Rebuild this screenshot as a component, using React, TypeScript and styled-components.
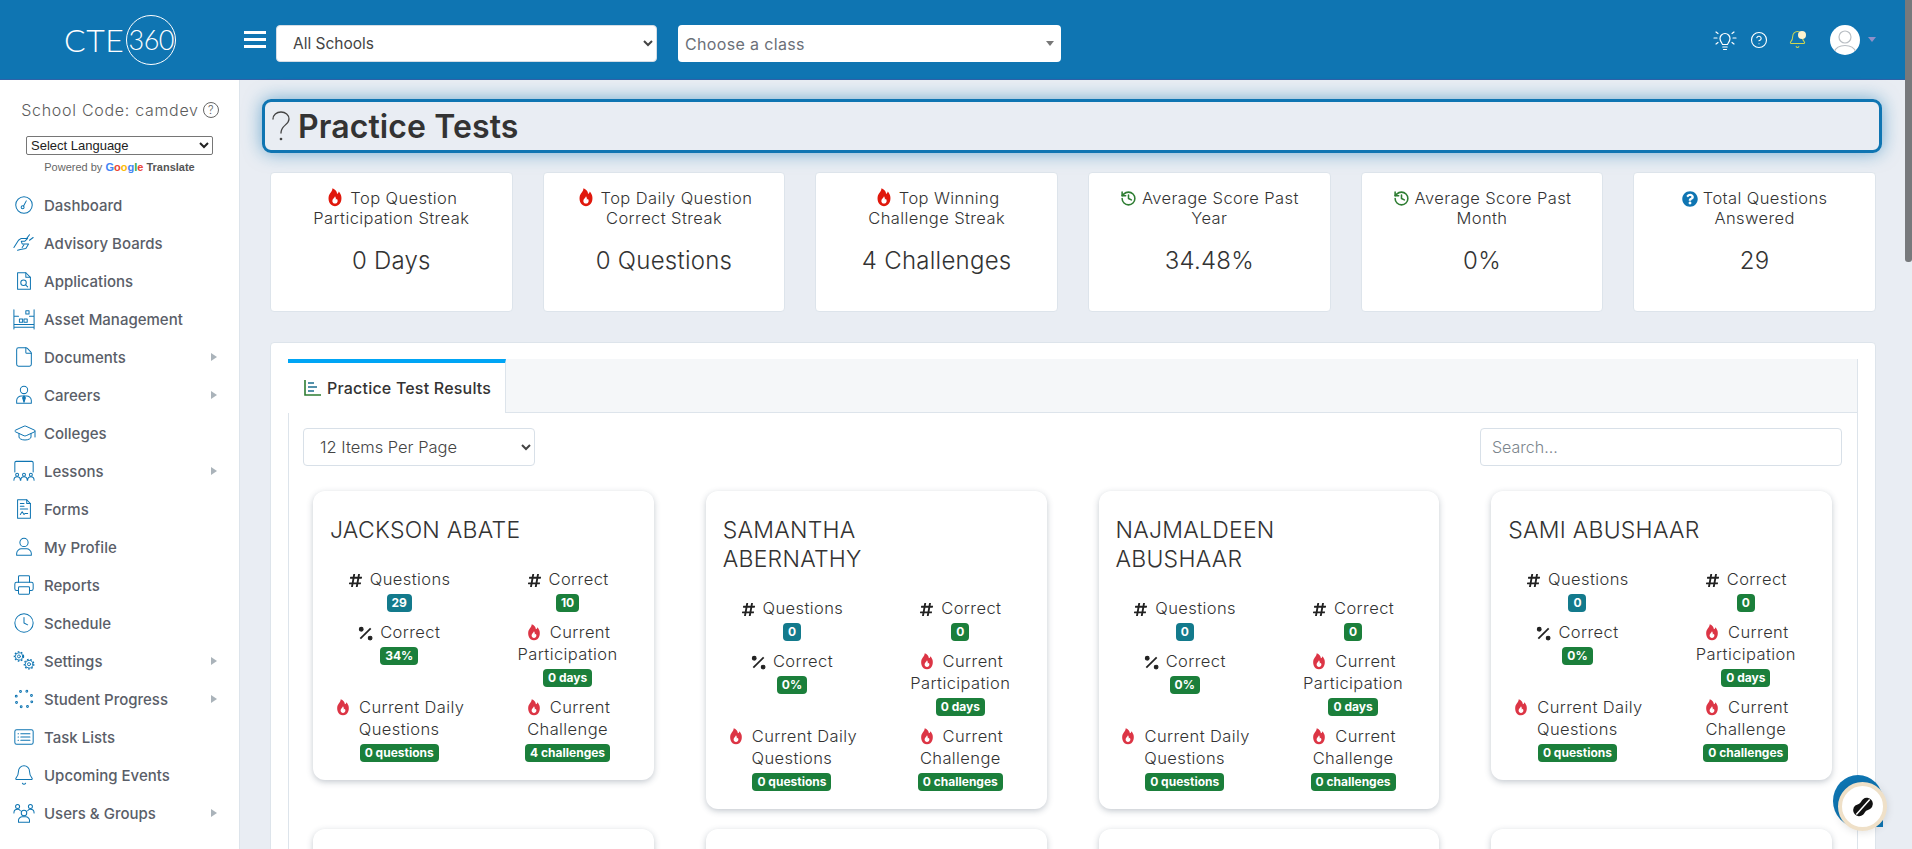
import React from "react";
import styled, { createGlobalStyle } from "styled-components";
import { Bell, CircleHelp, Clock, File, GraduationCap, History, Printer } from "lucide-react";
import { FaHashtag, FaQuestionCircle } from "react-icons/fa";

const BLUE = "#0f75b2";
const FONT = `Inter, "Noto Sans", "Liberation Sans", sans-serif`;

const Global = createGlobalStyle`
  html, body { margin: 0; height: 100%; overflow: hidden; }
  body { font-family: ${FONT}; color: #333; background: #e9edf3; }
  * { box-sizing: border-box; }
`;

const Page = styled.div`
  height: 849px;
  overflow: hidden;
  display: flex;
  flex-direction: column;
`;

const Header = styled.header`
  flex: 0 0 80px;
  background: ${BLUE};
  border-bottom: 1px solid #2f62a8;
  display: flex;
  align-items: center;
`;
const LogoArea = styled.div`
  width: 240px;
  display: flex;
  align-items: center;
  padding-left: 64px;
  color: #fff;
`;
const LogoWord = styled.span`
  font-family: Lato, sans-serif;
  font-weight: 300;
  font-size: 32px;
  letter-spacing: 0.5px;
  line-height: 1;
`;
const LogoRing = styled.span`
  width: 50px;
  height: 50px;
  margin-left: 2px;
  border: 1.4px solid #fff;
  border-radius: 50%;
  display: flex;
  align-items: center;
  justify-content: center;
  font-family: Lato, sans-serif;
  font-weight: 300;
  font-size: 27px;
  letter-spacing: -0.5px;
`;
const Burger = styled.button`
  width: 22px;
  height: 17px;
  margin: 0 10px 0 4px;
  padding: 0;
  border: 0;
  background: linear-gradient(#fff 0 3px, transparent 3px 7px, #fff 7px 10px, transparent 10px 14px, #fff 14px 17px);
`;
const TopSelect = styled.select`
  width: 381px;
  height: 37px;
  margin-top: 7px;
  padding: 1px 12px 0;
  border: 1px solid #d5dde5;
  border-radius: 4px;
  background: #fff;
  color: #444;
  font-family: ${FONT};
  font-size: 15.5px;
`;
const ClassPicker = styled.div`
  width: 383px;
  height: 37px;
  margin: 7px 0 0 21px;
  padding: 1px 7px 0;
  border-radius: 4px;
  background: #fff;
  color: #6b7078;
  font-size: 16px;
  letter-spacing: 0.35px;
  display: flex;
  align-items: center;
  justify-content: space-between;
`;
const SmallCaret = styled.span<{ $color: string }>`
  width: 0;
  height: 0;
  border-left: 4px solid transparent;
  border-right: 4px solid transparent;
  border-top: 5px solid ${(p) => p.$color};
`;
const HeaderTools = styled.div`
  margin-left: auto;
  padding-right: 36px;
  display: flex;
  align-items: center;
  color: #fff;
`;
const ToolSlot = styled.span<{ $w: number }>`
  width: ${(p) => p.$w}px;
  display: flex;
  justify-content: center;
  align-items: center;
  position: relative;
`;
const BellDot = styled.span`
  position: absolute;
  top: 1px;
  left: 22px;
  width: 8px;
  height: 8px;
  border-radius: 50%;
  background: #fdf3cf;
`;
const Avatar = styled.span`
  width: 30px;
  height: 30px;
  margin: 0 8px 0 12px;
  border-radius: 50%;
  background: #fff;
  overflow: hidden;
  display: flex;
`;

const Body = styled.div`
  flex: 1;
  display: flex;
  min-height: 0;
`;
const Sidebar = styled.aside`
  flex: 0 0 240px;
  background: #fff;
  border-right: 1px solid #dde4eb;
  padding-top: 19px;
`;
const SchoolCode = styled.div`
  height: 22px;
  display: flex;
  justify-content: center;
  align-items: center;
  gap: 4px;
  padding-left: 1px;
  color: #5c5c5c;
  font-size: 16px;
  font-weight: 300;
  letter-spacing: 0.7px;
`;
const HelpRing = styled.span`
  width: 16px;
  height: 16px;
  border: 1px solid #666;
  border-radius: 50%;
  font-size: 11px;
  letter-spacing: 0;
  display: flex;
  align-items: center;
  justify-content: center;
`;
const LangSelect = styled.select`
  display: block;
  width: 187px;
  height: 19px;
  margin: 15px 0 0 26px;
  font-family: "Liberation Sans", sans-serif;
  font-size: 13px;
  background: #fff;
  border: 1px solid #767676;
  border-radius: 2px;
  color: #222;
`;
const Powered = styled.div`
  margin-top: 4px;
  text-align: center;
  font-family: "Liberation Sans", sans-serif;
  font-size: 11px;
  line-height: 16px;
  color: #666;
`;
const GoogleLetter = styled.span<{ $c: string }>`
  color: ${(p) => p.$c};
  font-weight: 700;
`;
const TranslateWord = styled.b`
  color: #555;
`;
const Nav = styled.nav`
  margin-top: 11px;
`;
const NavItem = styled.div`
  height: 38px;
  display: flex;
  align-items: center;
  padding-right: 22px;
  color: #5a5e68;
  font-size: 15px;
  font-weight: 500;
`;
const NavIconBox = styled.span`
  flex: 0 0 44px;
  padding-left: 13px;
  display: flex;
  align-items: center;
`;
const NavArrow = styled.span`
  margin-left: auto;
  width: 0;
  height: 0;
  border-top: 4px solid transparent;
  border-bottom: 4px solid transparent;
  border-left: 6px solid #aab3ba;
`;

const Main = styled.main`
  flex: 1;
  min-width: 0;
  padding: 19px 30px 0 22px;
`;
const TitleBar = styled.div`
  height: 54px;
  border: 3.5px solid ${BLUE};
  border-radius: 9px;
  box-shadow: 0 0 18px rgba(15, 117, 178, 0.55);
  display: flex;
  align-items: center;
  padding-left: 5px;
  gap: 6px;
`;
const TitleText = styled.h1`
  margin: 0;
  font-size: 32px;
  font-weight: 600;
  color: #333;
  letter-spacing: 0.1px;
`;
const StatRow = styled.section`
  margin: 19px 6px 0 8px;
  display: grid;
  grid-template-columns: repeat(6, 1fr);
  gap: 30px;
`;
const StatCard = styled.div`
  height: 140px;
  background: #fff;
  border: 1px solid #dde4eb;
  border-radius: 4px;
  padding: 15px 6px 0;
  text-align: center;
`;
const StatLabel = styled.div`
  font-size: 16.5px;
  font-weight: 300;
  line-height: 20px;
  letter-spacing: 0.4px;
  color: #333;
  min-height: 40px;
`;
const StatIcon = styled.span<{ $c: string }>`
  display: inline-flex;
  vertical-align: -3px;
  margin: -4px 5px -4px 0;
  color: ${(p) => p.$c};
`;
const StatValue = styled.div`
  margin-top: 15px;
  font-size: 24px;
  font-weight: 300;
  line-height: 36px;
  letter-spacing: 0.25px;
  color: #333;
`;
const Panel = styled.section`
  margin: 30px 6px 0 8px;
  background: #fff;
  border: 1px solid #dde4eb;
  border-radius: 4px 4px 0 0;
  padding: 16px 17px 0;
`;
const TabBox = styled.div`
  border: 1px solid #dde4eb;
  border-bottom: 0;
`;
const TabStrip = styled.div`
  height: 54px;
  margin: -1px 0 0 -1px;
  background: #f5f7f9;
  border-bottom: 1px solid #dde4eb;
`;
const Tab = styled.div`
  width: 218px;
  height: 54px;
  background: #fff;
  border-top: 4px solid #00a5f5;
  border-right: 1px solid #dde4eb;
  display: flex;
  align-items: center;
  gap: 6px;
  padding-left: 16px;
  font-size: 16px;
  font-weight: 500;
  letter-spacing: 0.2px;
  color: #333;
`;
const TabBody = styled.div`
  padding: 15px 15px 0 14px;
`;
const Toolbar = styled.div`
  display: flex;
  justify-content: space-between;
`;
const PerPage = styled.select`
  width: 232px;
  height: 38px;
  padding: 0 12px;
  background: #fff;
  border: 1px solid #d8e0e8;
  border-radius: 4px;
  color: #444;
  font-family: ${FONT};
  font-size: 16.5px;
  font-weight: 300;
`;
const Search = styled.input`
  width: 362px;
  height: 38px;
  padding: 0 11px;
  border: 1px solid #d8e0e8;
  border-radius: 4px;
  font-family: ${FONT};
  font-size: 16px;
  font-weight: 300;
  &::placeholder { color: #7c858d; }
`;
const CardGrid = styled.div`
  margin-top: 25px;
  padding: 0 10px;
  display: grid;
  grid-template-columns: repeat(4, 1fr);
  column-gap: 52px;
  row-gap: 20px;
  align-items: start;
`;
const StudentCard = styled.article`
  background: #fff;
  border-radius: 12px;
  box-shadow: 0 2px 6px rgba(60, 75, 95, 0.3);
  padding: 25px 2px 18px;
  min-height: 60px;
`;
const StudentName = styled.h3`
  margin: 0 0 23px;
  padding-left: 15px;
  font-size: 23px;
  font-weight: 300;
  line-height: 29px;
  color: #333;
  letter-spacing: 0.25px;
`;
const BlockLine = styled.span`
  display: block;
`;
const Metrics = styled.div`
  display: grid;
  grid-template-columns: 1fr 1fr;
  row-gap: 9px;
`;
const Metric = styled.div`
  text-align: center;
  font-size: 16.5px;
  font-weight: 300;
  line-height: 22px;
  letter-spacing: 0.4px;
  color: #333;
`;
const MetricIcon = styled.span`
  display: inline-flex;
  vertical-align: -3px;
  margin: -3px 7px -3px 0;
  color: #222;
`;
const Badge = styled.span<{ $teal?: boolean }>`
  display: table;
  margin: 4px auto 0;
  height: 18px;
  padding: 0 5px;
  border-radius: 4px;
  background: ${(p) => (p.$teal ? "#137a8c" : "#1b7f3b")};
  color: #fff;
  font-size: 12px;
  font-weight: 700;
  line-height: 18px;
  letter-spacing: 0;
`;
const ScrollThumb = styled.div`
  position: fixed;
  top: 0;
  right: 0;
  width: 7px;
  height: 262px;
  background: #77797c;
  border-radius: 0 0 3px 3px;
`;
const FloatBack = styled.div`
  position: fixed;
  left: 1833px;
  top: 775px;
  width: 50px;
  height: 52px;
  background: ${BLUE};
  border-radius: 50% 50% 0 50%;
`;
const FloatButton = styled.div`
  position: fixed;
  left: 1838px;
  top: 782px;
  width: 49px;
  height: 49px;
  border-radius: 50%;
  background: #fff;
  border: 4px solid #efe0c8;
  box-shadow: 0 1px 8px rgba(0, 0, 0, 0.12);
  display: flex;
  align-items: center;
  justify-content: center;
`;

const Line = ({ size = 22, w = 24, children }: { size?: number; w?: number; children: React.ReactNode }) => (
  <svg width={size} height={size} viewBox={`0 0 ${w} 24`} fill="none" stroke={BLUE} strokeWidth={1.1} strokeLinecap="round" strokeLinejoin="round">
    {children}
  </svg>
);

const Flame = ({ color, size }: { color: string; size: number }) => (
  <svg width={size} height={size} viewBox="0 0 24 24">
    <path fill={color} d="M9 1.5C9 5 6 7 4.800 10 3.300 14 4.500 23 12 23s8.700-9 7.200-13c-.6-1.600-1.600-3.500-2.700-4.500-.2 1.500-1 2.500-2 2.800C14.500 5.300 12 2.500 9 1.500Z" />
    <path fill="#fff" d="M12 11c-.5 2-3.200 3-3.200 5.700 0 2 1.600 3.200 3.200 3.200s3.200-1.200 3.200-3.200c0-1-.4-1.900-1-2.500-.2.600-.7 1-1.200 1 .3-1.500-.2-3.100-1-4.200Z" />
  </svg>
);

const Gear = ({ cx, cy, r }: { cx: number; cy: number; r: number }) => (
  <>
    <circle cx={cx} cy={cy} r={r} strokeWidth={1} />
    <circle cx={cx} cy={cy} r={r + 1} strokeWidth={1.4} strokeDasharray="1.800 1.800" strokeLinecap="butt" />
    <circle cx={cx} cy={cy} r={r * 0.4} strokeWidth={1} />
  </>
);

const icons: Record<string, React.ReactNode> = {
  Dashboard: (
    <Line>
      <circle cx="12" cy="12" r="9" />
      <circle cx="10.500" cy="14.500" r="1.600" />
      <path d="M11.500 13.200 14.500 7.500" />
    </Line>
  ),
  "Advisory Boards": (
    <Line>
      <path d="M1 17 6 9l3-2h7l-3 3H9l1 3h7l-3 5-6 1-3 1" />
      <path d="M15 7l3-4M18 9l4-3M12 14l-2 3" />
    </Line>
  ),
  Applications: (
    <Line>
      <path d="M5 3h9l5 5v13H5Z" />
      <path d="M14 3v5h5" />
      <circle cx="11.500" cy="14" r="3" />
      <path d="m14 16.500 2 2" />
    </Line>
  ),
  "Asset Management": (
    <Line>
      <path d="M1 2v21M23 2v21M1 9h5M18 9h5M1 18h22M1 21h22" />
      <rect x="14" y="3" width="3.500" height="3.500" />
      <rect x="7" y="12" width="3.500" height="3.500" />
      <rect x="12" y="12" width="3.500" height="3.500" />
    </Line>
  ),
  Documents: <File size={22} strokeWidth={1.1} color={BLUE} />,
  Careers: (
    <Line>
      <circle cx="12" cy="6.500" r="4" />
      <path d="M4 21v-3c0-3 3-5 5-5h6c2 0 5 2 5 5v3Z" />
      <path d="m12 13-1.500 2 1.500 5 1.500-5Z" fill={BLUE} />
    </Line>
  ),
  Colleges: <GraduationCap size={24} strokeWidth={1} color={BLUE} />,
  Lessons: (
    <Line>
      <path d="M2 13V3c0-1 .5-1.500 1.500-1.500h17c1 0 1.500.5 1.500 1.500v10" />
      <circle cx="4.500" cy="16" r="1.600" />
      <circle cx="12" cy="16" r="1.600" />
      <circle cx="19.500" cy="16" r="1.600" />
      <path d="M1 22c0-5 7-5 7 0M8.500 22c0-5 7-5 7 0M16 22c0-5 7-5 7 0" />
    </Line>
  ),
  Forms: (
    <Line>
      <path d="M5 2h10l4 4v16H5Z" />
      <path d="M15 2v4h4M8 6h4M8 9h4M8 12h8" />
      <path d="m8 18 2-3 2 3 1-1h3" />
    </Line>
  ),
  "My Profile": (
    <Line>
      <circle cx="12" cy="7" r="4.500" />
      <path d="M4 21v-2c0-3 3-5 5-5h6c2 0 5 2 5 5v2Z" />
    </Line>
  ),
  Reports: <Printer size={22} strokeWidth={1.1} color={BLUE} />,
  Schedule: <Clock size={22} strokeWidth={1.1} color={BLUE} />,
  Settings: (
    <Line>
      <Gear cx={6.500} cy={7} r={4} />
      <Gear cx={17.500} cy={15.500} r={4.200} />
    </Line>
  ),
  "Student Progress": (
    <Line>
      {[20, 65, 110, 155, 200, 245, 290, 335].map((a) => (
        <circle key={a} cx={12 + 9 * Math.cos((a * Math.PI) / 180)} cy={12 + 9 * Math.sin((a * Math.PI) / 180)} r={1} />
      ))}
    </Line>
  ),
  "Task Lists": (
    <Line>
      <rect x="2" y="4" width="20" height="16" rx="2" />
      <path d="M8.500 8.500h10M8.500 12h10M8.500 15.500h10M5.500 8.500h.5M5.500 12h.5M5.500 15.500h.5" />
    </Line>
  ),
  "Upcoming Events": <Bell size={22} strokeWidth={1.1} color={BLUE} />,
  "Users & Groups": (
    <Line>
      <circle cx="12" cy="12" r="3" />
      <path d="M6 22v-2c0-2 2-4 4-4h4c2 0 4 2 4 4v2Z" />
      <circle cx="5" cy="5" r="2.200" />
      <circle cx="19" cy="5" r="2.200" />
      <path d="M1 12c0-3 1.500-4 4-4 1.500 0 2.500.5 3 1.500M23 12c0-3-1.500-4-4-4-1.500 0-2.500.5-3 1.500" />
    </Line>
  ),
};

const navItems: [string, boolean][] = [
  ["Dashboard", false],
  ["Advisory Boards", false],
  ["Applications", false],
  ["Asset Management", false],
  ["Documents", true],
  ["Careers", true],
  ["Colleges", false],
  ["Lessons", true],
  ["Forms", false],
  ["My Profile", false],
  ["Reports", false],
  ["Schedule", false],
  ["Settings", true],
  ["Student Progress", true],
  ["Task Lists", false],
  ["Upcoming Events", false],
  ["Users & Groups", true],
];

const stats = [
  { kind: "flame", lines: ["Top Question", "Participation Streak"], value: "0 Days" },
  { kind: "flame", lines: ["Top Daily Question", "Correct Streak"], value: "0 Questions" },
  { kind: "flame", lines: ["Top Winning", "Challenge Streak"], value: "4 Challenges" },
  { kind: "history", lines: ["Average Score Past", "Year"], value: "34.48%" },
  { kind: "history", lines: ["Average Score Past", "Month"], value: "0%" },
  { kind: "help", lines: ["Total Questions", "Answered"], value: "29" },
];

const students = [
  { name: ["JACKSON ABATE"], q: "29", c: "10", pct: "34%", chal: "4 challenges" },
  { name: ["SAMANTHA", "ABERNATHY"], q: "0", c: "0", pct: "0%", chal: "0 challenges" },
  { name: ["NAJMALDEEN", "ABUSHAAR"], q: "0", c: "0", pct: "0%", chal: "0 challenges" },
  { name: ["SAMI ABUSHAAR"], q: "0", c: "0", pct: "0%", chal: "0 challenges" },
];

const PercentGlyph = () => (
  <svg width="15" height="15" viewBox="0 0 13 13" fill="#222" stroke="#222">
    <path d="M11 2 2 11" strokeWidth="1.500" />
    <circle cx="2.800" cy="2.800" r="1.600" />
    <circle cx="10.500" cy="10.500" r="1.600" />
  </svg>
);

const ChartGlyph = () => (
  <svg width="17" height="16" viewBox="0 0 17 16" fill="none" strokeWidth="1.600">
    <path d="M1 0v15h16" stroke="#2e7d32" />
    <path d="M4 3h6M4 7h9M4 11h6" stroke="#1c6d8f" />
  </svg>
);

const MetricBlock = ({ icon, lines, value, teal }: { icon: React.ReactNode; lines: string[]; value: string; teal?: boolean }) => (
  <Metric>
    <MetricIcon>{icon}</MetricIcon>
    {lines[0]}
    {lines.slice(1).map((l) => (
      <BlockLine key={l}>{l}</BlockLine>
    ))}
    <Badge $teal={teal}>{value}</Badge>
  </Metric>
);

export default function App() {
  const googleColors: [string, string][] = [["G", "#4285f4"], ["o", "#ea4335"], ["o", "#fbbc05"], ["g", "#4285f4"], ["l", "#34a853"], ["e", "#ea4335"]];
  return (
    <Page>
      <Global />
      <Header>
        <LogoArea>
          <LogoWord>CTE</LogoWord>
          <LogoRing>360</LogoRing>
        </LogoArea>
        <Burger aria-label="Menu" />
        <TopSelect defaultValue="All Schools">
          <option>All Schools</option>
        </TopSelect>
        <ClassPicker>
          Choose a class
          <SmallCaret $color="#777" />
        </ClassPicker>
        <HeaderTools>
          <ToolSlot $w={34}>
            <svg width="24" height="22" viewBox="0 0 24 22" fill="none" stroke="#fff" strokeWidth="1.200" strokeLinecap="round">
              <path d="M9.500 15.500c-.3-1.500-2.500-3-2.500-6a5 5 0 0 1 10 0c0 3-2.200 4.500-2.500 6ZM9.800 18h4.400M10.500 20.500h3" />
              <path d="M1 9h3M20 9h3M3 3l2 1.500M21 3l-2 1.500M3 15l2-1.500M21 15l-2-1.500" />
            </svg>
          </ToolSlot>
          <ToolSlot $w={34}>
            <CircleHelp size={18} strokeWidth={1.5} color="#fff" />
          </ToolSlot>
          <ToolSlot $w={42}>
            <Bell size={19} strokeWidth={1.3} color="#cfd650" />
            <BellDot />
          </ToolSlot>
          <Avatar>
            <svg width="30" height="30" viewBox="0 0 30 30" fill="none" stroke="#b9bec4" strokeWidth="1.200">
              <circle cx="15" cy="12" r="6" />
              <path d="M4 27c2-5 6-6.500 11-6.500S24 22 26 27" />
            </svg>
          </Avatar>
          <SmallCaret $color="#8f90c9" />
        </HeaderTools>
      </Header>
      <Body>
        <Sidebar>
          <SchoolCode>
            School Code: camdev
            <HelpRing>?</HelpRing>
          </SchoolCode>
          <LangSelect defaultValue="Select Language">
            <option>Select Language</option>
          </LangSelect>
          <Powered>
            Powered by{" "}
            {googleColors.map(([l, c], i) => (
              <GoogleLetter key={i} $c={c}>{l}</GoogleLetter>
            ))}{" "}
            <TranslateWord>Translate</TranslateWord>
          </Powered>
          <Nav>
            {navItems.map(([label, sub]) => (
              <NavItem key={label}>
                <NavIconBox>{icons[label]}</NavIconBox>
                {label}
                {sub && <NavArrow />}
              </NavItem>
            ))}
          </Nav>
        </Sidebar>
        <Main>
          <TitleBar>
            <svg width="22" height="32" viewBox="0 0 22 32" fill="none" stroke="#444" strokeWidth="1.300" strokeLinecap="round">
              <path d="M3 9c0-4 3.500-7 8-7s8 3 8 7c0 6-8 6-8 14" />
              <circle cx="11" cy="29" r="0.700" fill="#444" />
            </svg>
            <TitleText>Practice Tests</TitleText>
          </TitleBar>
          <StatRow>
            {stats.map((s) => (
              <StatCard key={s.value + s.lines[0]}>
                <StatLabel>
                  {s.kind === "flame" && (
                    <StatIcon $c="#e0180c"><Flame color="#e0180c" size={20} /></StatIcon>
                  )}
                  {s.kind === "history" && (
                    <StatIcon $c="#2e7d32"><History size={17} strokeWidth={2.2} /></StatIcon>
                  )}
                  {s.kind === "help" && (
                    <StatIcon $c={BLUE}><FaQuestionCircle size={16} /></StatIcon>
                  )}
                  {s.lines[0]}
                  <BlockLine>{s.lines[1]}</BlockLine>
                </StatLabel>
                <StatValue>{s.value}</StatValue>
              </StatCard>
            ))}
          </StatRow>
          <Panel>
            <TabBox>
              <TabStrip>
                <Tab>
                  <ChartGlyph />
                  Practice Test Results
                </Tab>
              </TabStrip>
              <TabBody>
                <Toolbar>
                  <PerPage defaultValue="12 Items Per Page">
                    <option>12 Items Per Page</option>
                  </PerPage>
                  <Search placeholder="Search..." />
                </Toolbar>
                <CardGrid>
                  {students.map((s) => (
                    <StudentCard key={s.name.join()}>
                      <StudentName>
                        {s.name.map((n) => (
                          <BlockLine key={n}>{n}</BlockLine>
                        ))}
                      </StudentName>
                      <Metrics>
                        <MetricBlock icon={<FaHashtag size={15} />} lines={["Questions"]} value={s.q} teal />
                        <MetricBlock icon={<FaHashtag size={15} />} lines={["Correct"]} value={s.c} />
                        <MetricBlock icon={<PercentGlyph />} lines={["Correct"]} value={s.pct} />
                        <MetricBlock icon={<Flame color="#dc3545" size={18} />} lines={["Current", "Participation"]} value="0 days" />
                        <MetricBlock icon={<Flame color="#dc3545" size={18} />} lines={["Current Daily", "Questions"]} value="0 questions" />
                        <MetricBlock icon={<Flame color="#dc3545" size={18} />} lines={["Current", "Challenge"]} value={s.chal} />
                      </Metrics>
                    </StudentCard>
                  ))}
                  {[0, 1, 2, 3].map((i) => (
                    <StudentCard key={i} />
                  ))}
                </CardGrid>
              </TabBody>
            </TabBox>
          </Panel>
        </Main>
      </Body>
      <ScrollThumb />
      <FloatBack />
      <FloatButton>
        <svg width="22" height="22" viewBox="0 0 22 22">
          <g transform="rotate(-40 11 11)">
            <path fill="#111" d="M6 5c2 0 3 1 5 1s3-1 5-1a6 6 0 0 1 0 12c-2 0-3-1-5-1s-3 1-5 1A6 6 0 0 1 6 5Z" />
            <path d="M1 12.500 21 9.500" stroke="#fff" strokeWidth="1.500" />
          </g>
        </svg>
      </FloatButton>
    </Page>
  );
}
